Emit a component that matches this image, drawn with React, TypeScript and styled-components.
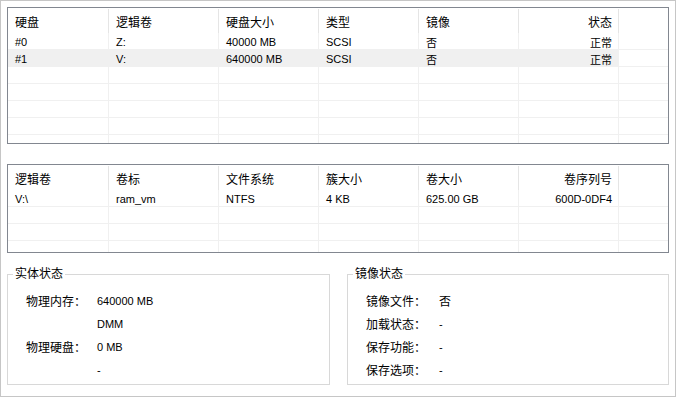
import React from "react";
import styled, { createGlobalStyle } from "styled-components";

const GlobalStyle = createGlobalStyle`
  html, body { margin: 0; padding: 0; background: #fff; }
  body {
    font-family: "Liberation Sans", "Noto Sans CJK SC", sans-serif;
    color: #000;
  }
`;

const COLS = "101px 110px 100px 100px 100px 100px 1fr";

const Window = styled.div`
  box-sizing: border-box;
  width: 676px;
  height: 397px;
  border: 1px solid #c6c6c6;
  padding: 6px;
  display: flex;
  flex-direction: column;
  background: #fff;
  overflow: hidden;
`;

const ListView = styled.div<{ $height: number; $gap?: number }>`
  box-sizing: border-box;
  flex-shrink: 0;
  height: ${(p) => p.$height}px;
  margin-top: ${(p) => p.$gap || 0}px;
  border: 1px solid #828790;
  overflow: hidden;
`;

const HeaderRow = styled.div`
  display: grid;
  grid-template-columns: ${COLS};
  height: 25px;
`;

const HeaderCell = styled.div<{ $right?: boolean; $filler?: boolean }>`
  box-sizing: border-box;
  display: flex;
  align-items: center;
  justify-content: ${(p) => (p.$right ? "flex-end" : "flex-start")};
  padding: 0 6px 0 7px;
  margin-top: 1px;
  border-right: ${(p) => (p.$filler ? "none" : "1px solid #e5e5e5")};
  font-size: 12px;
  white-space: nowrap;
`;

const Row = styled.div`
  box-sizing: border-box;
  display: grid;
  grid-template-columns: ${COLS};
  height: 17px;
  border-bottom: 1px solid #f0f0f0;
`;

const Cell = styled.div<{ $right?: boolean; $sel?: boolean; $filler?: boolean }>`
  box-sizing: border-box;
  display: flex;
  align-items: center;
  justify-content: ${(p) => (p.$right ? "flex-end" : "flex-start")};
  padding: 1px 6px 0 7px;
  background: ${(p) => (p.$sel && !p.$filler ? "#f0f0f0" : "transparent")};
  border-right: ${(p) => (p.$filler ? "none" : "1px solid #f0f0f0")};
  font-size: 11px;
  white-space: nowrap;
`;

const Groups = styled.div`
  display: grid;
  grid-template-columns: 323px 1fr;
  column-gap: 17px;
  margin-top: 14px;
`;

const GroupBox = styled.fieldset`
  box-sizing: border-box;
  margin: 0;
  min-width: 0;
  border: 1px solid #d8d8d8;
  padding: 8px 0 3px 0;
`;

const Legend = styled.legend`
  margin-left: 5px;
  padding: 0 2px;
  font-size: 12px;
  line-height: 14px;
`;

const InfoRow = styled.div<{ $labelWidth: number }>`
  display: grid;
  grid-template-columns: ${(p) => p.$labelWidth}px 1fr;
  align-items: center;
  height: 23px;
  padding-left: 18px;
`;

const Label = styled.span`
  font-size: 12px;
`;

const Value = styled.span<{ $cjk?: boolean }>`
  font-size: ${(p) => (p.$cjk ? 12 : 11)}px;
`;

type Column = { title: string; right?: boolean };

const diskCols: Column[] = [
  { title: "硬盘" },
  { title: "逻辑卷" },
  { title: "硬盘大小" },
  { title: "类型" },
  { title: "镜像" },
  { title: "状态", right: true },
];

const diskRows = [
  ["#0", "Z:", "40000 MB", "SCSI", "否", "正常"],
  ["#1", "V:", "640000 MB", "SCSI", "否", "正常"],
];

const volCols: Column[] = [
  { title: "逻辑卷" },
  { title: "卷标" },
  { title: "文件系统" },
  { title: "簇大小" },
  { title: "卷大小" },
  { title: "卷序列号", right: true },
];

const volRows = [["V:\\", "ram_vm", "NTFS", "4 KB", "625.00 GB", "600D-0DF4"]];

function Table({
  cols,
  rows,
  total,
  selected,
  height,
  gap,
}: {
  cols: Column[];
  rows: string[][];
  total: number;
  selected?: number;
  height: number;
  gap?: number;
}) {
  const filled = Array.from({ length: total }, (_, i) => rows[i] || cols.map(() => ""));
  return (
    <ListView $height={height} $gap={gap}>
      <HeaderRow>
        {cols.map((c) => (
          <HeaderCell key={c.title} $right={c.right}>
            {c.title}
          </HeaderCell>
        ))}
        <HeaderCell $filler />
      </HeaderRow>
      {filled.map((r, i) => (
        <Row key={i}>
          {r.map((v, j) => (
            <Cell key={j} $right={cols[j].right} $sel={i === selected}>
              {v}
            </Cell>
          ))}
          <Cell $filler />
        </Row>
      ))}
    </ListView>
  );
}

export default function App() {
  return (
    <>
      <GlobalStyle />
      <Window>
        <Table cols={diskCols} rows={diskRows} total={7} selected={1} height={137} />
        <Table cols={volCols} rows={volRows} total={4} height={89} gap={20} />
        <Groups>
          <GroupBox>
            <Legend>实体状态</Legend>
            <InfoRow $labelWidth={71}>
              <Label>物理内存：</Label>
              <Value>640000 MB</Value>
            </InfoRow>
            <InfoRow $labelWidth={71}>
              <Label />
              <Value>DMM</Value>
            </InfoRow>
            <InfoRow $labelWidth={71}>
              <Label>物理硬盘：</Label>
              <Value>0 MB</Value>
            </InfoRow>
            <InfoRow $labelWidth={71}>
              <Label />
              <Value>-</Value>
            </InfoRow>
          </GroupBox>
          <GroupBox>
            <Legend>镜像状态</Legend>
            <InfoRow $labelWidth={73}>
              <Label>镜像文件：</Label>
              <Value $cjk>否</Value>
            </InfoRow>
            <InfoRow $labelWidth={73}>
              <Label>加载状态：</Label>
              <Value>-</Value>
            </InfoRow>
            <InfoRow $labelWidth={73}>
              <Label>保存功能：</Label>
              <Value>-</Value>
            </InfoRow>
            <InfoRow $labelWidth={73}>
              <Label>保存选项：</Label>
              <Value>-</Value>
            </InfoRow>
          </GroupBox>
        </Groups>
      </Window>
    </>
  );
}
